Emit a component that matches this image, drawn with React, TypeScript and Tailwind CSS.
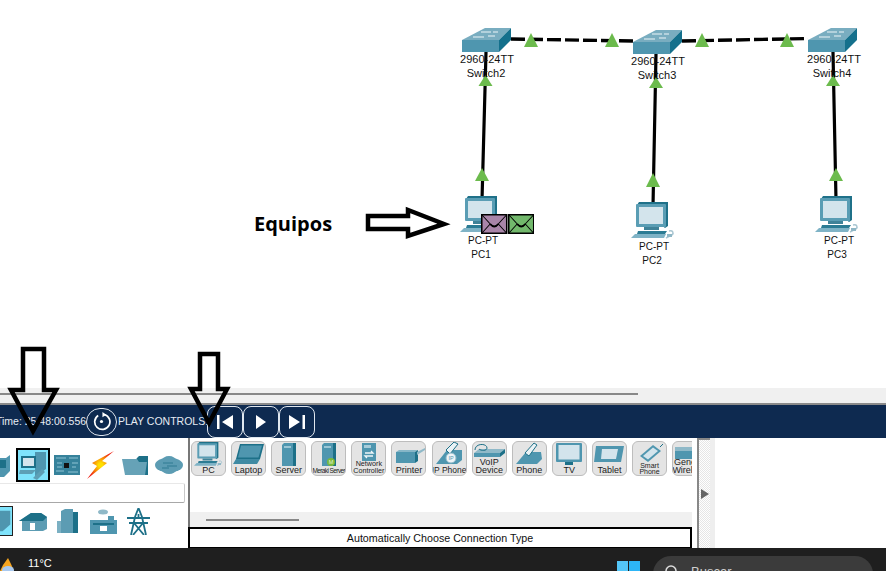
import React from "react";

const Pc = ({ className = "" }: { className?: string }) => (
  <svg viewBox="0 0 44 38" className={className}>
    <path d="M6 3 L8 0 H37 V24 L34 26 Z" fill="#1f7189" />
    <rect x="5" y="2" width="30" height="23" rx="1" fill="#5a9db4" />
    <rect x="8" y="5" width="24" height="17" fill="#d3e4ec" />
    <path d="M13 25 H28 V28 H13 Z" fill="#3f8298" />
    <path d="M7 29 H36 L34 32 H6 Z" fill="#2c7c94" />
    <path d="M4 32 H35 L33 36 H0 Z" fill="#7fb3c6" />
    <path d="M38 29 C42 28 43 31 41 33 L35 36" fill="none" stroke="#a9c6d2" strokeWidth="1.5" />
    <rect x="36" y="32" width="5" height="3" fill="#8fb7c6" />
  </svg>
);

const Sw = ({ className = "" }: { className?: string }) => (
  <svg viewBox="0 0 49 24" className={className}>
    <path d="M0 12 L23 0 H49 L37 12 Z" fill="#79adc0" />
    <rect x="0" y="12" width="37" height="12" fill="#4f96af" />
    <path d="M37 12 L49 0 V12 L37 24 Z" fill="#14708c" />
    <path d="M19 4 H29 M31 4 H36 M11 9 H22 M26 8 H33" stroke="#eef5f7" strokeWidth="1.2" />
  </svg>
);

const Env = ({ bg }: { bg: string }) => (
  <svg viewBox="0 0 26 20" className="h-[20px] w-[26.5px]" preserveAspectRatio="none">
    <rect x="0.75" y="0.75" width="24.5" height="18.5" fill={bg} stroke="#000" strokeWidth="1.5" />
    <path d="M1 1 L10 11 Q13 14 16 11 L25 1 M1 19 L9 10 M25 19 L17 10" fill="none" stroke="#000" strokeWidth="1" />
    <path d="M9 10 Q13 15 17 10" fill="none" stroke="#000" strokeWidth="1.8" />
  </svg>
);

const Label = ({ x, y, small, children }: { x: number; y: number; small?: boolean; children: React.ReactNode }) => (
  <span
    className={`absolute -translate-x-1/2 -translate-y-1/2 whitespace-nowrap leading-none text-[#111] [font-family:'Liberation_Sans',sans-serif] ${small ? "text-[10px]" : "text-[11px]"}`}
    style={{ left: x, top: y }}
  >
    {children}
  </span>
);

const Canvas = () => {
  const tris: [number, number, number, number][] = [
    [485.5, 75, 86, 7],
    [656, 77, 88, 7],
    [833, 75, 86, 7],
    [482, 168, 181, 7],
    [653, 173, 187, 7],
    [836, 168, 181, 7],
    [531, 33, 47, 7],
    [612, 33, 47, 7],
    [702, 33, 47, 7],
    [787, 33, 47, 7],
  ];
  return (
    <div className="relative h-[388px] shrink-0 bg-white">
      <svg className="absolute left-0 top-0" width="886" height="388">
        <path d="M486 52 L482 200 M656 54 L653 206 M833 52 L836 200" stroke="#000" strokeWidth="3.2" />
        <path d="M511 39 L633 41 M682 41 L808 38.5" stroke="#000" strokeWidth="3.4" strokeDasharray="14 4" />
        {tris.map(([x, a, b, w], i) => (
          <path key={i} d={`M${x} ${a} L${x + w} ${b} H${x - w} Z`} fill="#6cbb4d" />
        ))}
      </svg>
      <Sw className="absolute left-[462px] top-[28px] h-[24px] w-[49px]" />
      <Sw className="absolute left-[633px] top-[30px] h-[24px] w-[49px]" />
      <Sw className="absolute left-[808px] top-[28px] h-[24px] w-[49px]" />
      <Label x={487} y={59}>2960-24TT</Label>
      <Label x={486} y={73}>Switch2</Label>
      <Label x={658} y={61}>2960-24TT</Label>
      <Label x={657} y={75}>Switch3</Label>
      <Label x={834} y={59}>2960-24TT</Label>
      <Label x={832} y={73}>Switch4</Label>
      <Pc className="absolute left-[460px] top-[196px] h-[38px] w-[44px]" />
      <Pc className="absolute left-[631px] top-[202px] h-[38px] w-[44px]" />
      <Pc className="absolute left-[815px] top-[196px] h-[38px] w-[44px]" />
      <Label x={483} y={241} small>PC-PT</Label>
      <Label x={481} y={255} small>PC1</Label>
      <Label x={654} y={247} small>PC-PT</Label>
      <Label x={652} y={261} small>PC2</Label>
      <Label x={839} y={241} small>PC-PT</Label>
      <Label x={837} y={255} small>PC3</Label>
      <div className="absolute left-[481px] top-[214px] flex">
        <Env bg="#a985a9" />
        <Env bg="#72b86c" />
      </div>
      <span className="absolute left-[254px] top-[210px] text-[20px] font-bold leading-[28px] text-black [font-family:'Open_Sans',sans-serif]">
        Equipos
      </span>
    </div>
  );
};

const T = "#4f96af";
const D = "#1d7088";
const L = "#d3e4ec";

const tiles: { label: React.ReactNode; size: string; icon: React.ReactNode }[] = [
  { label: "PC", size: "text-[9px] leading-[10px]", icon: <Pc className="h-[25px] w-[29px]" /> },
  {
    label: "Laptop",
    size: "text-[9px] leading-[10px]",
    icon: (
      <svg viewBox="0 0 32 26" className="h-[26px] w-[32px]">
        <path d="M7 2 H31 L27 17 H3 Z" fill={D} />
        <path d="M8 3.5 H29 L25.5 15.5 H5 Z" fill={T} />
        <path d="M3 17 H27 L24 22 H0 Z" fill="#3f8aa3" />
      </svg>
    ),
  },
  {
    label: "Server",
    size: "text-[9px] leading-[10px]",
    icon: (
      <svg viewBox="0 0 32 26" className="h-[26px] w-[32px]">
        <path d="M9 3 L11 1 H23 V24 H9 Z" fill={T} />
        <path d="M20 1 H23 V24 H20 Z" fill={D} />
        <rect x="11" y="4" width="7" height="2" fill="#9cc6d5" />
      </svg>
    ),
  },
  {
    label: <span className="whitespace-nowrap tracking-[-0.6px]">Meraki Server</span>,
    size: "text-[6.5px] leading-[9px]",
    icon: (
      <svg viewBox="0 0 32 26" className="h-[26px] w-[32px]">
        <path d="M9 3 L11 1 H23 V24 H9 Z" fill={T} />
        <path d="M20 1 H23 V24 H20 Z" fill={D} />
        <rect x="11" y="4" width="7" height="2" fill="#9cc6d5" />
        <circle cx="18" cy="20" r="4" fill="#79b93a" />
        <text x="18" y="22" fontSize="5.5" fill="#e8f5d8" textAnchor="middle" fontFamily="Liberation Sans">M</text>
      </svg>
    ),
  },
  {
    label: <>Network<br />Controller</>,
    size: "text-[7.2px] leading-[6.5px] pb-[1px]",
    icon: (
      <svg viewBox="0 0 32 26" className="h-[26px] w-[32px]">
        <path d="M9 1 H23 V19 H9 Z" fill={T} />
        <rect x="11" y="3" width="7" height="3" fill="#a8ccd9" />
        <path d="M12 11 H20 L18 9 M20 14 H12 L14 16" fill="none" stroke="#eef6f9" strokeWidth="1.3" />
      </svg>
    ),
  },
  {
    label: "Printer",
    size: "text-[9px] leading-[10px]",
    icon: (
      <svg viewBox="0 0 32 26" className="h-[26px] w-[32px]">
        <path d="M3 10 H22 V21 H3 Z" fill={T} />
        <path d="M3 10 L6 8 H25 L22 10 Z" fill="#86b6c7" />
        <path d="M22 10 L25 8 V19 L22 21 Z" fill={D} />
        <path d="M24 10 L32 6 V8 L24 13 Z" fill="#8fb9c8" />
      </svg>
    ),
  },
  {
    label: <span className="whitespace-nowrap">IP Phone</span>,
    size: "text-[8.5px] leading-[10px]",
    icon: (
      <svg viewBox="0 0 32 26" className="h-[26px] w-[32px]">
        <path d="M3 22 L14 8 H29 V18 L24 22 Z" fill={T} />
        <path d="M13 8 L21 0 L25 2 L17 12 Z" fill="#eaf2f5" stroke={D} strokeWidth="1" />
        <circle cx="18" cy="16" r="5" fill="#eef4f7" stroke="#8fb9c8" />
        <text x="18" y="18" fontSize="5.5" fill="#4f96af" textAnchor="middle" fontFamily="Liberation Sans">IP</text>
      </svg>
    ),
  },
  {
    label: <>VoIP<br />Device</>,
    size: "text-[9px] leading-[8px] pb-[1px]",
    icon: (
      <svg viewBox="0 0 32 26" className="h-[26px] w-[32px]">
        <path d="M1 11 L6 7 H32 L27 11 Z" fill="#8fb9c8" />
        <path d="M1 11 H27 V15 H1 Z" fill={T} />
        <path d="M27 11 L32 7 V11 L27 15 Z" fill={D} />
        <path d="M2 8 C2 1 14 1 14 6 C14 9 8 9 6 7" fill="none" stroke={D} strokeWidth="1" />
      </svg>
    ),
  },
  {
    label: "Phone",
    size: "text-[9px] leading-[10px]",
    icon: (
      <svg viewBox="0 0 32 26" className="h-[26px] w-[32px]">
        <path d="M3 22 L13 10 H28 L29 17 L24 22 Z" fill={T} />
        <path d="M12 11 L21 1 L24 3 L16 14 Z" fill="#eaf2f5" stroke={D} strokeWidth="1" />
      </svg>
    ),
  },
  {
    label: "TV",
    size: "text-[9px] leading-[10px]",
    icon: (
      <svg viewBox="0 0 32 26" className="h-[26px] w-[32px]">
        <rect x="3" y="1" width="26" height="19" rx="1" fill={T} />
        <rect x="5.5" y="3" width="21" height="14.5" fill={L} />
        <path d="M12 20 H20 V23 H12 Z" fill={D} />
      </svg>
    ),
  },
  {
    label: "Tablet",
    size: "text-[9px] leading-[10px]",
    icon: (
      <svg viewBox="0 0 32 26" className="h-[26px] w-[32px]">
        <path d="M3 4 H31 L28 20 H1 Z" fill={T} />
        <path d="M9 7 H25 L23 17 H8 Z" fill={L} />
      </svg>
    ),
  },
  {
    label: <>Smart<br />Phone</>,
    size: "text-[7px] leading-[5.5px] pb-[1px]",
    icon: (
      <svg viewBox="0 0 32 26" className="h-[26px] w-[32px]">
        <path d="M6 14 L19 3 L27 9 L14 20 Z" fill={T} />
        <path d="M9 14 L19 5.5 L24 9 L14 17.5 Z" fill={L} />
        <path d="M26 5 L29 2" stroke={D} strokeWidth="1" />
      </svg>
    ),
  },
  {
    label: <>Generic<br />Wireless</>,
    size: "text-[9px] leading-[8px] whitespace-nowrap pb-[1px]",
    icon: (
      <svg viewBox="0 0 32 26" className="h-[26px] w-[32px]">
        <path d="M1 5 H32 V17 H1 Z" fill={T} />
        <path d="M1 5 H32 V9 H1 Z" fill="#8fb9c8" />
      </svg>
    ),
  },
];

const Tile = ({ t }: { t: (typeof tiles)[number] }) => (
  <div className="relative flex h-[35px] w-[35px] shrink-0 items-end justify-center overflow-hidden rounded-[6px] border border-[#bdbdbd] bg-[#e4e4e4]">
    <div className="absolute left-0 right-0 top-0 flex justify-center">{t.icon}</div>
    <span className={`relative text-center text-[#222] ${t.size}`}>{t.label}</span>
  </div>
);

const CtrlBtn = ({ children }: { children: React.ReactNode }) => (
  <div className="flex h-[32px] w-[36px] items-center justify-center rounded-lg border border-[#dfe6ee]">{children}</div>
);

const Nav = () => (
  <div className="flex h-[33px] shrink-0 items-center bg-[#0e2a50] text-[10.5px] text-[#e6ecf3]">
    <span className="-ml-1 w-[90px] shrink-0 whitespace-nowrap">Time: 25:48:00.556</span>
    <div className="flex h-[28px] w-[31px] shrink-0 items-center justify-center rounded-full border border-[#dfe6ee]">
      <svg viewBox="0 0 20 20" className="h-[19px] w-[19px]">
        <path d="M6.5 3.6 A8 8 0 1 0 13 2.6" fill="none" stroke="#fff" strokeWidth="1.8" />
        <path d="M11 0 L15 2.8 L11 5.6 Z" fill="#fff" />
        <circle cx="10" cy="10" r="1.7" fill="#fff" />
      </svg>
    </div>
    <span className="ml-[1px] w-[89px] shrink-0 whitespace-nowrap">PLAY CONTROLS:</span>
    <div className="flex">
      <CtrlBtn>
        <svg viewBox="0 0 18 14" className="h-[14px] w-[18px]"><path d="M1 0 H3.5 V14 H1 Z M17 0 V14 L6 7 Z" fill="#fff" /></svg>
      </CtrlBtn>
      <CtrlBtn>
        <svg viewBox="0 0 12 14" className="h-[14px] w-[12px]"><path d="M1 0 L11 7 L1 14 Z" fill="#fff" /></svg>
      </CtrlBtn>
      <CtrlBtn>
        <svg viewBox="0 0 18 14" className="h-[14px] w-[18px]"><path d="M1 0 L12 7 L1 14 Z M14.5 0 H17 V14 H14.5 Z" fill="#fff" /></svg>
      </CtrlBtn>
    </div>
  </div>
);

const LeftPanel = () => (
  <div className="flex h-[110px] w-[188px] shrink-0 flex-col overflow-hidden bg-white">
    <div className="flex h-[45px] shrink-0 items-center pt-[9px]">
      <svg viewBox="0 0 16 28" className="-ml-1 h-[28px] w-[16px] shrink-0">
        <path d="M0 7 H10 L14 4 V20 L8 26 H0 Z" fill={T} />
        <path d="M2 9 H10 V17 H2 Z" fill={D} />
      </svg>
      <div className="ml-[4px] flex h-[34px] w-[34px] shrink-0 items-center justify-center border-2 border-black bg-[#7fe3fb]">
        <svg viewBox="0 0 30 30" className="h-[30px] w-[30px]">
          <path d="M17 2 H28 V19 L17 27 Z" fill={T} />
          <rect x="3" y="6" width="15" height="12" fill={D} />
          <rect x="5" y="8" width="11" height="8" fill={L} />
          <path d="M2 20 H18 L14 24 H1 Z" fill="#5d9fb5" />
          <path d="M15 28 L24 19 L27 22 L19 30 Z" fill="#5d9fb5" />
        </svg>
      </div>
      <svg viewBox="0 0 26 20" className="ml-[4px] h-[20px] w-[26px] shrink-0">
        <rect width="26" height="20" fill="#36829b" />
        <path d="M2 3 H12 M15 3 H24 M2 16 H10 M14 17 H24 M3 8 H8 M18 8 H24 M3 12 H8 M18 12 H22" stroke="#8ec3d4" />
        <rect x="10" y="8" width="5" height="5" fill="#111" />
      </svg>
      <svg viewBox="0 0 27 28" className="ml-[7px] h-[28px] w-[27px] shrink-0">
        <defs>
          <radialGradient id="bolt">
            <stop offset="0.15" stopColor="#ffe000" />
            <stop offset="1" stopColor="#ee1c10" />
          </radialGradient>
        </defs>
        <path d="M27 0 L15 10 L20 12 L0 28 L10 15 L5 12 Z" fill="url(#bolt)" />
      </svg>
      <svg viewBox="0 0 26 19" className="ml-[8px] h-[19px] w-[26px] shrink-0">
        <path d="M15 2 L17 0 H26 V19 H3 Z" fill={D} />
        <path d="M0 3 H15 L17 6 H25 L23 19 H3 Z" fill="#66a2b7" />
      </svg>
      <svg viewBox="0 0 28 18" className="ml-[7px] h-[18px] w-[28px] shrink-0">
        <ellipse cx="14" cy="9" rx="14" ry="7.5" fill="#5c9cb3" />
        <ellipse cx="14" cy="5" rx="7" ry="5" fill="#5c9cb3" />
        <ellipse cx="14" cy="14" rx="7" ry="4" fill="#5c9cb3" />
        <path d="M8 7 H18 M12 10 H22 M7 12 H14" stroke="#2e7a92" />
      </svg>
    </div>
    <div className="-ml-1 h-[20px] w-[189px] shrink-0 rounded-[2px] border border-[#e8e8e8] border-b-[#a8a8a8] border-r-[#c8c8c8] bg-white" />
    <div className="flex h-[36px] shrink-0 items-center">
      <div className="-ml-[1px] flex h-[30px] w-[14px] shrink-0 items-center overflow-hidden border border-[#222] bg-[#7fe3fb]">
        <svg viewBox="0 0 14 28" className="h-[28px] w-[14px]"><path d="M0 2 H12 V18 L3 26 H0 Z" fill={T} /></svg>
      </div>
      <svg viewBox="0 0 28 20" className="ml-[6px] h-[20px] w-[28px] shrink-0">
        <path d="M0 10 L12 2 H22 L28 6 V18 L24 20 H3 V10 Z" fill="#5c9cb3" />
        <path d="M0 10 L12 2 H22 L28 6 L24 10 Z" fill={D} />
        <rect x="11" y="12" width="5" height="7" fill="#fff" />
      </svg>
      <svg viewBox="0 0 21 24" className="ml-[10px] h-[24px] w-[21px] shrink-0">
        <path d="M0 12 H4 V24 H0 Z" fill="#7bb0c3" />
        <path d="M4 2 L8 0 H16 V24 H4 Z" fill="#5c9cb3" />
        <path d="M16 3 H21 V24 H16 Z" fill={D} />
      </svg>
      <svg viewBox="0 0 27 25" className="ml-[12px] h-[25px] w-[27px] shrink-0">
        <ellipse cx="13" cy="3" rx="5" ry="2.5" fill="#8fb9c8" />
        <path d="M0 11 H18 V7 H24 V11 H27 V25 H0 Z" fill={T} />
        <rect x="3" y="14" width="21" height="2" fill={D} />
        <rect x="10" y="17" width="7" height="5" fill="#fff" />
      </svg>
      <svg viewBox="0 0 25 27" className="ml-[9px] h-[27px] w-[25px] shrink-0">
        <path d="M12.5 0 L16 9 L20 27 M12.5 0 L9 9 L5 27 M1 10 H24 M3 15 H22 M8 15 L18 27 M17 15 L7 27 M12.5 6 V10" fill="none" stroke={D} strokeWidth="1.8" />
      </svg>
    </div>
  </div>
);

const RightPanel = () => (
  <div className="flex h-[110px] w-[504px] shrink-0 flex-col">
    <div className="flex h-[74px] shrink-0 gap-[5.1px] overflow-hidden border-l-2 border-[#777] bg-white pl-[1px] pt-[3px]">
      {tiles.map((t, i) => (
        <Tile key={i} t={t} />
      ))}
    </div>
    <div className="flex h-[15px] shrink-0 items-center border-l-2 border-[#777] bg-[#f0f0f0] pl-[16px]">
      <div className="h-[2px] w-[93px] bg-[#888]" />
    </div>
    <div className="flex h-[21px] shrink-0 items-center justify-center border-2 border-b border-black bg-white text-[10.7px] text-[#111]">
      Automatically Choose Connection Type
    </div>
  </div>
);

const SideScroll = () => (
  <div className="flex h-[110px] w-[23px] shrink-0 bg-white">
    <div className="w-[5px] shrink-0" />
    <div className="flex w-[13px] shrink-0 items-center justify-center border-l-2 border-t-2 border-[#888] bg-[repeating-conic-gradient(#e6e6e6_0_25%,#fff_0_50%)] bg-[length:2px_2px]">
      <svg viewBox="0 0 8 10" className="h-[10px] w-[8px]"><path d="M0 0 L8 5 L0 10 Z" fill="#666" /></svg>
    </div>
    <div className="w-[5px] shrink-0 bg-[#eeeeee]" />
  </div>
);

const Taskbar = () => (
  <div className="relative flex h-[23px] shrink-0 overflow-hidden bg-[#1f1f1f] text-white">
    <svg viewBox="0 0 15 13" className="mt-[10px] h-[13px] w-[15px] shrink-0">
      <path d="M8 0 L11 6 L14 13 H0 L3 7 Z" fill="#f6a51f" />
      <ellipse cx="8" cy="12" rx="6" ry="4" fill="#a9c9ef" />
    </svg>
    <span className="ml-[13px] w-[60px] shrink-0 pt-[8px] text-[11px] leading-[14px]">11°C</span>
    <div className="ml-[529px] mt-[13px] flex h-[20px] w-[23px] shrink-0 gap-[1px]">
      <div className="h-full w-[11px] bg-[#54c6f7]" />
      <div className="h-full w-[11px] bg-[#2db5f6]" />
    </div>
    <div className="ml-[13px] mt-[8px] flex h-[40px] w-[220px] shrink-0 items-start rounded-[18px] bg-[#3b3b3b] pl-[12px] pt-[9px]">
      <svg viewBox="0 0 14 14" className="h-[14px] w-[14px] shrink-0">
        <circle cx="6" cy="6" r="5" fill="none" stroke="#ddd" strokeWidth="1.5" />
        <path d="M10 10 L13 13" stroke="#ddd" strokeWidth="1.5" />
      </svg>
      <span className="ml-[12px] text-[13px] leading-[14px] text-[#cfcfcf]">Buscar</span>
    </div>
  </div>
);

const Arrows = () => (
  <svg className="pointer-events-none absolute left-0 top-0" width="886" height="571" fill="none" stroke="#000" strokeWidth="4.5">
    <path d="M23 349 H44 V390 H56 L33 431 L11 390 H23 Z" />
    <path d="M200 354 H218 V389 H227 L209 423 L191 389 H200 Z" />
    <path d="M368 216 H408 V210 L444 224 L408 236 V229 H368 Z" />
  </svg>
);

export default function App() {
  return (
    <div className="relative flex h-[571px] w-[886px] flex-col overflow-hidden bg-white [font-family:'Liberation_Sans',sans-serif]">
      <Canvas />
      <div className="flex h-[7px] shrink-0 items-end bg-[#f0f0f0]">
        <div className="h-[2px] w-[638px] bg-[#888]" />
      </div>
      <div className="h-[10px] shrink-0 border-b-2 border-[#8a8a8a] bg-[#f0f0f0]" />
      <Nav />
      <div className="flex h-[110px] shrink-0">
        <LeftPanel />
        <RightPanel />
        <SideScroll />
      </div>
      <Taskbar />
      <Arrows />
    </div>
  );
}
